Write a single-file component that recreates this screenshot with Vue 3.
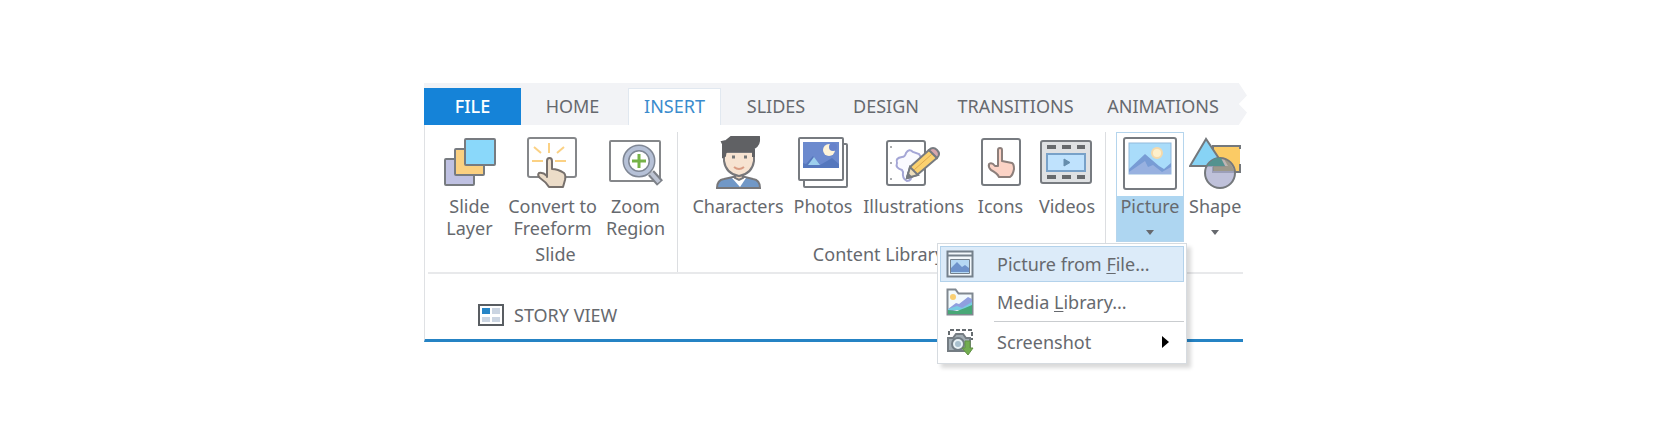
<script setup>
const tabs = ['HOME', 'INSERT', 'SLIDES', 'DESIGN', 'TRANSITIONS', 'ANIMATIONS']
</script>

<template>
  <div class="page">
    <main class="app">
      <nav class="tabs" aria-label="Ribbon tabs">
        <button class="tab file">FILE</button>
        <button v-for="t in tabs" :key="t" class="tab" :class="{ active: t === 'INSERT' }">{{ t }}</button>
      </nav>

      <div class="body">
        <div class="ribbon">
          <section class="group slide" aria-labelledby="g-slide">
            <div class="tools">
              <button class="tool">
                <svg viewBox="0 0 56 60" stroke="#777b80" stroke-width="2">
                  <rect x="3" y="27" width="29" height="26" rx="1" fill="#bfc1e2" />
                  <rect x="13" y="17" width="29" height="26" rx="1" fill="#fbd080" />
                  <rect x="23" y="7" width="30" height="26" rx="1" fill="#8ad8fa" />
                </svg>
                <span>Slide<br />Layer</span>
              </button>
              <button class="tool">
                <svg viewBox="1 0 56 60" fill="none" stroke-width="2">
                  <rect x="4" y="6" width="48" height="39" rx="2" fill="#fff" stroke="#85878a" />
                  <path d="M25 11v10M10 15l7 6M40 15l-7 6M8 29h11M31 29h11" stroke="#fbd184" />
                  <path d="M23 45V29q0-3 2.500-3t2.500 3v8q6 0 12 4 2 2 1 7l-2 7H25q-3-5-9-9-3-3-1-5 4-1 8 3z" fill="#ecdcc8" stroke="#77706c" stroke-linejoin="round" />
                </svg>
                <span>Convert to<br />Freeform</span>
              </button>
              <button class="tool">
                <svg viewBox="0 0 56 60" fill="none">
                  <rect x="2" y="9" width="50" height="40" rx="1" fill="#fff" stroke="#85878a" stroke-width="2" />
                  <path d="M43 41l9 10" stroke="#7d8188" stroke-width="8" />
                  <path d="M43 41l8 9" stroke="#bdc4d3" stroke-width="4" />
                  <circle cx="31" cy="29" r="13" fill="#fff" stroke="#7f8795" stroke-width="7" />
                  <circle cx="31" cy="29" r="13" stroke="#b6c1d7" stroke-width="4" />
                  <path d="M31 22v14M24 29h14" stroke="#76b348" stroke-width="3" />
                </svg>
                <span>Zoom<br />Region</span>
              </button>
            </div>
            <h2 id="g-slide">Slide</h2>
          </section>

          <section class="group library" aria-labelledby="g-library">
            <div class="tools">
              <button class="tool">
                <svg viewBox="0 0 56 60" stroke-width="2" stroke="#77777a">
                  <path d="M7 56q0-8 7-9l9-2h12l8 2q7 1 7 9z" fill="#7198c7" />
                  <path d="M22 46h14l-6 9z" fill="#fff" stroke="none" />
                  <path d="M25 40v6l4 2 4-2v-6z" fill="#eed6bf" />
                  <path d="M14 20v9q2 13 15 15 13-2 15-15v-9z" fill="#f7e3d1" />
                  <path d="M13 25V12l-1-2 4-1 5-4h28q1 8-5 11v8h-1v-5H17q-2 1-2 5z" fill="#606164" stroke="#606164" />
                  <path d="M22 25h3M34 25h3" stroke="#777" stroke-width="3" />
                  <path d="M24 35q5 4 10 0" fill="none" stroke="#da9c83" />
                </svg>
                <span>Characters</span>
              </button>
              <button class="tool">
                <svg viewBox="0 0 56 60" fill="#fff" stroke="#777b80" stroke-width="2">
                  <rect x="9" y="12" width="43" height="43" rx="1" />
                  <rect x="4" y="6" width="44" height="42" rx="1" />
                  <g stroke="none">
                    <rect x="8" y="10" width="36" height="26" fill="#6c8ace" />
                    <path d="M8 36V31l3 1 7-8 7 9 7-4 5-3 7 6v4z" fill="#5577bd" />
                    <path d="M13 33l6-8 6 8z" fill="#9dcfed" />
                    <circle cx="34" cy="18" r="6" fill="#fff4d9" />
                    <circle cx="38" cy="15" r="4" fill="#6682cb" />
                  </g>
                </svg>
                <span>Photos</span>
              </button>
              <button class="tool">
                <svg viewBox="1 0 56 60" fill="none" stroke="#777b80" stroke-width="2">
                  <rect x="2" y="9" width="38" height="44" rx="2" fill="#fff" />
                  <path d="M6 14v2M6 30v2M6 46v2" stroke="#a9abad" />
                  <path d="M17 38q-7-2-5-7-2-5 5-6 3 0 4-4 3-5 7-1l6 2 3 5-4 6-6 8q0 8-5 8-5-2-4-9z" fill="#fafaff" stroke="#a4a6d6" />
                  <path d="M22 46l3-11 19-17 8 8-20 17z" fill="#fbd16f" stroke-linejoin="round" />
                  <path d="M25 35l8 8-11 3z" fill="#efdfbd" />
                  <path d="M22 46l1-4 3 3z" fill="#777b80" />
                  <path d="M44 18q4-4 8 0t0 8z" fill="#d9a6ad" />
                  <path d="M29 38l18-16" stroke="#dca850" stroke-width="1" />
                </svg>
                <span>Illustrations</span>
              </button>
              <button class="tool">
                <svg viewBox="1 0 56 60" stroke="#777b80" stroke-width="2">
                  <rect x="10" y="7" width="38" height="46" rx="2" fill="#fff" />
                  <path d="M26 34V18q0-2 2-2t2 2v11l10 2q2 1 2 6-1 6-4 8H27q-2-4-8-7-3-3-2-6 3-2 6 2z" fill="#fcd3c6" stroke="#8d7f7b" stroke-linejoin="round" />
                </svg>
                <span>Icons</span>
              </button>
              <button class="tool">
                <svg viewBox="0 0 56 60" stroke="#777b80" stroke-width="2">
                  <rect x="2" y="9" width="50" height="42" rx="2" fill="#dfe1e3" />
                  <rect x="8" y="22" width="38" height="17" fill="#bfe2fd" stroke="#78a1c8" />
                  <path d="M25 27l6 3.500-6 3.500z" fill="#668dac" stroke="#668dac" stroke-width="1" />
                  <path d="M8 15h9M23 15h9M38 15h8M8 45h9M23 45h9M38 45h8" stroke-width="4" stroke="#66696c" />
                </svg>
                <span>Videos</span>
              </button>
            </div>
            <h2 id="g-library">Content Library</h2>
          </section>

          <section class="group media" aria-label="Media">
            <div class="dropdown">
              <button class="tool picture" aria-haspopup="menu" aria-expanded="true">
                <svg viewBox="0 0 56 60">
                  <rect x="2" y="6" width="52" height="51" rx="2" fill="#fff" stroke="#777b80" stroke-width="2" />
                  <rect x="7" y="11" width="42" height="31" fill="#a9dcfa" stroke="#92b9dc" />
                  <circle cx="35" cy="21" r="5" fill="#fff0cb" stroke="#f5d9aa" stroke-width="2" />
                  <path d="M7 37l16-15 14 12 5 3 7-6v11H7z" fill="#789cd5" />
                  <path d="M7 40l16-11 3 6 5-2 9 7 9-5v7H7z" fill="#98b1e0" />
                </svg>
                <span>Picture</span>
                <i class="caret"></i>
              </button>

              <ul class="menu" role="menu">
                <li role="none">
                  <button class="item hot" role="menuitem">
                    <svg viewBox="0 0 28 28" fill="none" stroke="#74808b" stroke-width="1">
                      <path d="M1.500 1.500h25v25h-25zM1.500 5.500h25" fill="#f3f8fc" stroke-width="2" />
                      <path d="M4.500 9.500h19v14h-19z" fill="#b5d9f4" />
                      <path d="M5 22v-4l6-6 5 5 3-2 4 3v4H5z" fill="#6d93cb" stroke="none" />
                    </svg>
                    <span>Picture from <u>F</u>ile...</span>
                  </button>
                </li>
                <li role="none">
                  <button class="item" role="menuitem">
                    <svg viewBox="0 0 28 28">
                      <path d="M1.500 26.500v-25h8l3 4h14v21z" fill="#f2fafd" stroke="#808890" stroke-width="2" />
                      <circle cx="7" cy="9" r="3" fill="#f9cf72" />
                      <path d="M2 21l8-6 3 1 9-7 4 2v8L2 24z" fill="#8f9fdf" />
                      <path d="M2 21l9-3 5 2 10-6v8H2z" fill="#77cce2" />
                      <path d="M2 22l9 1 8-3 7-3v9H2z" fill="#48a877" />
                    </svg>
                    <span>Media <u>L</u>ibrary...</span>
                  </button>
                </li>
                <li class="rule" role="separator"></li>
                <li role="none">
                  <button class="item" role="menuitem" aria-haspopup="menu">
                    <svg viewBox="0 0 28 28" fill="none">
                      <path d="M3 7V2h23v10" stroke="#666c70" stroke-width="2" stroke-dasharray="4 2" />
                      <path d="M2 10h5l3-4h7l3 4h4v13H2z" fill="#a2adb4" stroke="#747c82" stroke-width="2" />
                      <circle cx="12" cy="16" r="6" fill="#e7f1f5" stroke="#727d85" stroke-width="2" />
                      <circle cx="12" cy="16" r="3" fill="#a8c0ce" />
                      <path d="M19 13h5v7h3l-5 7-6-7h3z" fill="#72ad50" stroke="#629244" />
                    </svg>
                    <span>Screenshot</span>
                    <i class="more"></i>
                  </button>
                </li>
              </ul>
            </div>

            <button class="tool shape" aria-haspopup="menu">
              <svg viewBox="1 0 56 60" stroke="#74787c" stroke-width="2">
                <path d="M52 17v-3H25v26h27v-8" fill="#fbcb65" />
                <path d="M18 7L2 34h34z" fill="#87d3f5" />
                <circle cx="32" cy="41" r="15" fill="#a9accd" fill-opacity=".75" />
                <path d="M26 27q3-2 7-1l4 8H19q2-4 7-7z" fill="#54928f" stroke="none" />
                <path d="M36 27q7 2 10 12H25V34h15z" fill="#85856e" fill-opacity=".6" stroke="none" />
              </svg>
              <span>Shape</span>
              <i class="caret"></i>
            </button>
          </section>
        </div>

        <div class="story">
          <button class="view">
            <svg viewBox="0 0 26 22">
              <rect x="1" y="1" width="24" height="20" fill="#fff" stroke="#595d62" stroke-width="2" />
              <path d="M4 4h8v6H4z" fill="#2785c6" />
              <path d="M14 4h8v6h-8zM4 13h8v5H4zM14 13h8v5h-8z" fill="#cbd5e2" />
            </svg>
            <span>STORY VIEW</span>
          </button>
        </div>
      </div>
    </main>
  </div>
</template>

<style>
body {
  margin: 0;
  background: #fff;
}
</style>

<style scoped>
.page {
  display: grid;
  grid-template-columns: 424fr 823fr 433fr;
  padding: 83px 0;
  font-family: "Noto Sans", "Open Sans", sans-serif;
  font-size: 18px;
  line-height: 22px;
  color: #66696e;
}
.app {
  grid-column: 2;
  min-width: 0;
}
button {
  font: inherit;
  color: inherit;
  border: 0;
  background: none;
  padding: 0;
  margin: 0;
  white-space: nowrap;
}
svg {
  display: block;
  flex: none;
}
.tabs {
  display: grid;
  grid-template-columns: 97px 107px 93px 110px 110px 149px 146px;
  padding-top: 5px;
  background: #f2f3f6;
  clip-path: polygon(0 0, 99% 0, 100% 30%, 99% 50%, 100% 70%, 99% 100%, 0 100%);
}
.tab {
  height: 37px;
  padding-bottom: 1px;
}
.tab:nth-child(2) {
  padding-right: 4px;
}
.file {
  background: #1583d8;
  color: #fff;
  font-weight: 500;
}
.tab.active {
  padding-bottom: 2px;
  background: #fff;
  color: #3b8ccd;
  border: 1px solid #e1e8f0;
  border-bottom: 0;
}
.body {
  margin-right: 4px;
  border-left: 1px solid #dfe1e4;
  border-bottom: 3px solid #2583c4;
}
.ribbon {
  display: flex;
  margin-left: 3px;
  padding-top: 5px;
  border-bottom: 2px solid #e8e9eb;
}
.group {
  margin-top: 2px;
  height: 140px;
}
.slide,
.library {
  border-right: 1px solid #dcdee1;
}
.tools {
  display: grid;
}
.slide .tools {
  grid-template-columns: 83px 83px 83px;
}
.library .tools {
  grid-template-columns: 88px 82px 99px 75px 58px;
  padding: 0 9px 0 16px;
}
.tool {
  display: flex;
  flex-direction: column;
  align-items: center;
  gap: 3px;
}
.tool svg {
  width: 56px;
  height: 60px;
}
.tools .tool {
  height: 108px;
}
h2 {
  margin: 3px 0 0;
  font-size: 18px;
  font-weight: 400;
  text-align: center;
}
.slide h2 {
  padding-left: 6px;
}
.library h2 {
  padding-right: 26px;
}
.media {
  display: flex;
  flex: 1;
  gap: 5px;
  min-width: 0;
  padding-left: 10px;
}
.dropdown {
  position: relative;
  flex: none;
}
.picture {
  width: 68px;
  height: 110px;
  box-shadow: inset 0 0 0 1px #b5d5ed;
  background: linear-gradient(#fff 64px, #aed6f1 64px);
}
.caret {
  margin-top: 10px;
  border: 4px solid transparent;
  border-top: 5px solid #66696e;
  border-bottom: 0;
}
.shape {
  flex: 1;
  min-width: 0;
  align-items: flex-start;
  overflow: hidden;
}
.shape .caret {
  margin-left: 22px;
}
.menu {
  position: absolute;
  z-index: 2;
  top: 111px;
  right: -3px;
  box-sizing: border-box;
  width: 250px;
  margin: 0;
  padding: 2px;
  list-style: none;
  background: #fff;
  border: 1px solid #d6dbe0;
  box-shadow: 4px 4px 4px #00000026;
}
.item {
  display: flex;
  align-items: center;
  box-sizing: border-box;
  width: 100%;
  height: 39px;
  padding: 0 14px 0 5px;
  gap: 23px;
  border: 1px solid transparent;
}
.item.hot {
  height: 36px;
  background: #dcebf9;
  border-color: #b3d2eb;
}
.item svg {
  width: 28px;
  height: 28px;
}
.item u {
  text-underline-offset: 2px;
}
.rule {
  height: 1px;
  margin-left: 54px;
  background: #c9cccf;
}
.more {
  margin-left: auto;
  border: 6px solid transparent;
  border-left: 7px solid #000;
  border-right: 0;
}
.story {
  padding: 30px 53px 13px;
}
.view {
  display: flex;
  align-items: center;
  gap: 10px;
}
.view svg {
  width: 26px;
  height: 22px;
}
</style>
